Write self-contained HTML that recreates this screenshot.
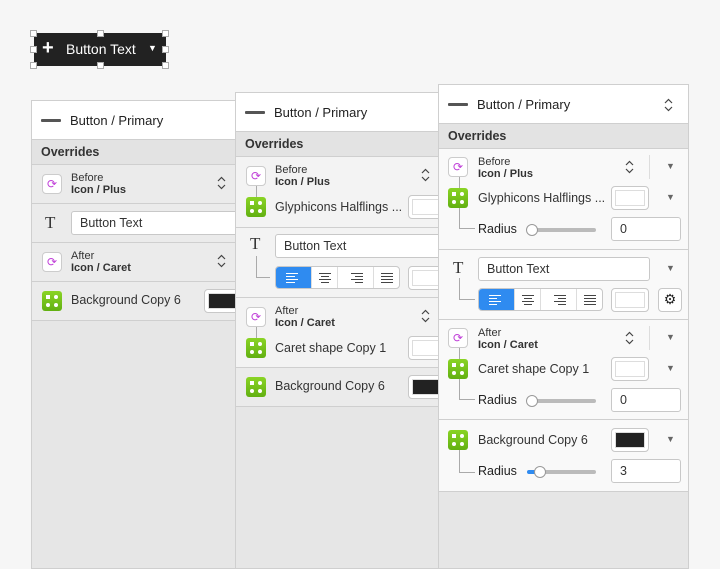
<!DOCTYPE html><html><head><style>
*{box-sizing:border-box;margin:0;padding:0}
body{width:720px;height:567px;overflow:hidden;background:#f6f6f6;font-family:"Liberation Sans",sans-serif;color:#333;position:relative;font-size:12.5px}
.a{position:absolute}
.panel{position:absolute;background:#e6e6e6;border:1px solid #cfcfcf;bottom:-2px;overflow:hidden}
.hdr{position:absolute;left:0;right:0;top:0;height:39px;background:#fff;border-bottom:1px solid #cfcfcf}
.hdr .t{position:absolute;left:38px;top:12px;font-size:13px;color:#222}
.hdr .sym{position:absolute;left:9px;top:18px;width:20px;height:3px;background:#555;border-radius:1px}
.ov{position:absolute;left:0;right:0;height:25px;background:#e3e3e3;border-bottom:1px solid #cfcfcf;font-weight:bold;font-size:12.5px;padding:5px 0 0 9px;color:#333}
.row{position:absolute;left:0;right:0;border-bottom:1px solid #cfcfcf}
.sw{position:absolute;width:20px;height:20px;border:1px solid #ccc;border-radius:4px;background:#fff;color:#c03fd8;font-size:12px;text-align:center;line-height:18px}
.gr{position:absolute;width:20px;height:20px;border-radius:3px;background:linear-gradient(#8ad425,#62b012)}
.gr i{position:absolute;width:4px;height:4px;background:#fff;border-radius:2px}
.gr i:first-child{border-radius:0}
.lbl{position:absolute;font-size:12.5px;color:#333;white-space:nowrap}
.sm{font-size:11px;line-height:12px}
.inp{position:absolute;background:#fff;border:1px solid #c8c8c8;border-radius:3px;height:24px;padding:4px 8px;font-size:12.5px}
.cw{position:absolute;width:38px;height:24px;border:1px solid #c8c8c8;border-radius:4px;background:#fff;padding:3px}
.cw b{display:block;width:100%;height:100%;border:1px solid #ddd}
.ud{position:absolute;width:9px;height:14px}
.dd{position:absolute;font-size:9px;color:#666}
.ln{position:absolute;border-left:1px solid #aaa;border-bottom:1px solid #aaa}
.sl{position:absolute;height:4px;background:#bbb;border-radius:2px}
.kn{position:absolute;width:12px;height:12px;border:1px solid #999;border-radius:6px;background:#fff}
.al{position:absolute;height:23px;border:1px solid #c8c8c8;border-radius:4px;background:#fff;display:flex;overflow:hidden}
.al div{flex:1;border-left:1px solid #ddd;display:flex;flex-direction:column;justify-content:center;align-items:center;gap:2px}
.al div:first-child{border:0;background:#2f8bf0}
.al span{display:block;height:1px;background:#444;width:12px}
.al div:first-child span{background:#fff}
.T{position:absolute;font-family:"Liberation Serif",serif;font-size:17px;color:#333}
.h{position:absolute;width:7px;height:7px;border:1px solid #aaa;background:#fff}
</style></head><body>
<svg width="0" height="0" style="position:absolute"><defs><symbol id="ud" viewBox="0 0 9 14"><path d="M1 5l3.5-3.5L8 5M1 9l3.5 3.5L8 9" fill="none" stroke="#444" stroke-width="1.2"/></symbol></defs></svg>

<div class="a" style="left:34px;top:33px;width:132px;height:33px;background:#222;color:#fff;font-size:14px">
<span class="a" style="left:8px;top:4px;font-size:20px;font-weight:bold">+</span>
<span class="a" style="left:32px;top:8px">Button Text</span>
<span class="a" style="left:114px;top:10px;font-size:9px">▼</span></div>
<div class="h" style="left:30px;top:30px"></div><div class="h" style="left:97px;top:30px"></div><div class="h" style="left:162px;top:30px"></div>
<div class="h" style="left:30px;top:46px"></div><div class="h" style="left:162px;top:46px"></div>
<div class="h" style="left:30px;top:62px"></div><div class="h" style="left:97px;top:62px"></div><div class="h" style="left:162px;top:62px"></div>

<!-- Panel 1 -->
<div class="panel" style="left:31px;top:100px;width:220px">
<div class="hdr"><div class="sym"></div><div class="t">Button / Primary</div></div>
<div class="ov" style="top:39px">Overrides</div>
<div class="row" style="top:64px;height:39px;background:#ebebeb">
<div class="sw" style="left:10px;top:9px">⟳</div>
<div class="lbl sm" style="left:39px;top:7px">Before<br><b>Icon / Plus</b></div>
<svg class="ud" style="left:185px;top:11px"><use href="#ud"/></svg></div>
<div class="row" style="top:103px;height:39px;background:#ebebeb">
<div class="T" style="left:13px;top:9px">T</div>
<div class="inp" style="left:39px;top:7px;width:190px">Button Text</div></div>
<div class="row" style="top:142px;height:39px;background:#ebebeb">
<div class="sw" style="left:10px;top:9px">⟳</div>
<div class="lbl sm" style="left:39px;top:7px">After<br><b>Icon / Caret</b></div>
<svg class="ud" style="left:185px;top:11px"><use href="#ud"/></svg></div>
<div class="row" style="top:181px;height:39px;background:#ebebeb">
<div class="gr" style="left:10px;top:9px"><i style="left:4px;top:4px"></i><i style="left:12px;top:4px"></i><i style="left:4px;top:12px"></i><i style="left:12px;top:12px"></i></div>
<div class="lbl" style="left:39px;top:11px">Background Copy 6</div>
<div class="cw" style="left:172px;top:7px"><b style="background:#222"></b></div></div>
</div>

<!-- Panel 2 -->
<div class="panel" style="left:235px;top:92px;width:215px">
<div class="hdr"><div class="sym"></div><div class="t">Button / Primary</div></div>
<div class="ov" style="top:39px">Overrides</div>
<div class="row" style="top:64px;height:71px;background:#f3f3f3">
<div class="ln" style="left:20px;top:28px;height:12px;width:0"></div>
<div class="sw" style="left:10px;top:9px">⟳</div>
<div class="lbl sm" style="left:39px;top:7px">Before<br><b>Icon / Plus</b></div>
<svg class="ud" style="left:185px;top:11px"><use href="#ud"/></svg>
<div class="gr" style="left:10px;top:40px"><i style="left:4px;top:4px"></i><i style="left:12px;top:4px"></i><i style="left:4px;top:12px"></i><i style="left:12px;top:12px"></i></div>
<div class="lbl" style="left:39px;top:43px">Glyphicons Halflings ...</div>
<div class="cw" style="left:172px;top:38px"><b></b></div></div>
<div class="row" style="top:135px;height:70px;background:#f3f3f3">
<div class="T" style="left:14px;top:6px">T</div>
<div class="ln" style="left:20px;top:28px;height:22px;width:14px"></div>
<div class="inp" style="left:39px;top:6px;width:190px">Button Text</div>
<div class="al" style="left:39px;top:38px;width:125px"><div style="align-items:flex-start;padding-left:10px"><span></span><span style="width:9px"></span><span></span><span style="width:9px"></span></div><div><span></span><span style="width:8px"></span><span></span><span style="width:8px"></span></div><div style="align-items:flex-end;padding-right:10px"><span></span><span style="width:8px"></span><span></span><span style="width:8px"></span></div><div><span></span><span></span><span></span><span></span></div></div>
<div class="cw" style="left:172px;top:38px"><b></b></div></div>
<div class="row" style="top:205px;height:70px;background:#f3f3f3">
<div class="ln" style="left:20px;top:28px;height:12px;width:0"></div>
<div class="sw" style="left:10px;top:9px">⟳</div>
<div class="lbl sm" style="left:39px;top:7px">After<br><b>Icon / Caret</b></div>
<svg class="ud" style="left:185px;top:11px"><use href="#ud"/></svg>
<div class="gr" style="left:10px;top:40px"><i style="left:4px;top:4px"></i><i style="left:12px;top:4px"></i><i style="left:4px;top:12px"></i><i style="left:12px;top:12px"></i></div>
<div class="lbl" style="left:39px;top:43px">Caret shape Copy 1</div>
<div class="cw" style="left:172px;top:38px"><b></b></div></div>
<div class="row" style="top:275px;height:39px;background:#ebebeb">
<div class="gr" style="left:10px;top:9px"><i style="left:4px;top:4px"></i><i style="left:12px;top:4px"></i><i style="left:4px;top:12px"></i><i style="left:12px;top:12px"></i></div>
<div class="lbl" style="left:39px;top:11px">Background Copy 6</div>
<div class="cw" style="left:172px;top:7px"><b style="background:#222"></b></div></div>
</div>

<!-- Panel 3 -->
<div class="panel" style="left:438px;top:84px;width:251px">
<div class="hdr"><div class="sym"></div><div class="t">Button / Primary</div><svg class="ud" style="left:225px;top:13px"><use href="#ud"/></svg></div>
<div class="ov" style="top:39px">Overrides</div>
<div class="row" style="top:64px;height:101px;background:#f9f9f9">
<div class="ln" style="left:20px;top:28px;height:52px;width:16px"></div>
<div class="sw" style="left:9px;top:8px">⟳</div>
<div class="lbl sm" style="left:39px;top:7px">Before<br><b>Icon / Plus</b></div>
<svg class="ud" style="left:186px;top:11px"><use href="#ud"/></svg>
<div class="a" style="left:210px;top:6px;width:1px;height:24px;background:#ddd"></div>
<div class="dd" style="left:227px;top:12px">▼</div>
<div class="gr" style="left:9px;top:39px"><i style="left:4px;top:4px"></i><i style="left:12px;top:4px"></i><i style="left:4px;top:12px"></i><i style="left:12px;top:12px"></i></div>
<div class="lbl" style="left:39px;top:42px">Glyphicons Halflings ...</div>
<div class="cw" style="left:172px;top:37px"><b></b></div>
<div class="dd" style="left:227px;top:43px">▼</div>
<div class="lbl" style="left:39px;top:73px;color:#222">Radius</div>
<div class="sl" style="left:90px;top:79px;width:67px"></div><div class="kn" style="left:87px;top:75px"></div>
<div class="inp" style="left:172px;top:68px;width:70px">0</div></div>
<div class="row" style="top:165px;height:70px;background:#f9f9f9">
<div class="T" style="left:14px;top:8px">T</div>
<div class="ln" style="left:20px;top:28px;height:22px;width:16px"></div>
<div class="inp" style="left:39px;top:7px;width:172px">Button Text</div>
<div class="dd" style="left:227px;top:13px">▼</div>
<div class="al" style="left:39px;top:38px;width:125px"><div style="align-items:flex-start;padding-left:10px"><span></span><span style="width:8px"></span><span></span><span style="width:8px"></span></div><div><span></span><span style="width:8px"></span><span></span><span style="width:8px"></span></div><div style="align-items:flex-end;padding-right:10px"><span></span><span style="width:8px"></span><span></span><span style="width:8px"></span></div><div><span></span><span></span><span></span><span></span></div></div>
<div class="cw" style="left:172px;top:38px"><b></b></div>
<div class="a" style="left:219px;top:38px;width:24px;height:24px;border:1px solid #c8c8c8;border-radius:4px;background:#fff;text-align:center;line-height:21px;font-size:14px;color:#222">⚙</div></div>
<div class="row" style="top:235px;height:100px;background:#f9f9f9">
<div class="ln" style="left:20px;top:28px;height:52px;width:16px"></div>
<div class="sw" style="left:9px;top:8px">⟳</div>
<div class="lbl sm" style="left:39px;top:7px">After<br><b>Icon / Caret</b></div>
<svg class="ud" style="left:186px;top:11px"><use href="#ud"/></svg>
<div class="a" style="left:210px;top:6px;width:1px;height:24px;background:#ddd"></div>
<div class="dd" style="left:227px;top:12px">▼</div>
<div class="gr" style="left:9px;top:39px"><i style="left:4px;top:4px"></i><i style="left:12px;top:4px"></i><i style="left:4px;top:12px"></i><i style="left:12px;top:12px"></i></div>
<div class="lbl" style="left:39px;top:42px">Caret shape Copy 1</div>
<div class="cw" style="left:172px;top:37px"><b></b></div>
<div class="dd" style="left:227px;top:43px">▼</div>
<div class="lbl" style="left:39px;top:73px;color:#222">Radius</div>
<div class="sl" style="left:90px;top:79px;width:67px"></div><div class="kn" style="left:87px;top:75px"></div>
<div class="inp" style="left:172px;top:68px;width:70px">0</div></div>
<div class="row" style="top:335px;height:72px;background:#f9f9f9">
<div class="ln" style="left:20px;top:26px;height:27px;width:16px"></div>
<div class="gr" style="left:9px;top:10px"><i style="left:4px;top:4px"></i><i style="left:12px;top:4px"></i><i style="left:4px;top:12px"></i><i style="left:12px;top:12px"></i></div>
<div class="lbl" style="left:39px;top:13px">Background Copy 6</div>
<div class="cw" style="left:172px;top:8px"><b style="background:#222"></b></div>
<div class="dd" style="left:227px;top:14px">▼</div>
<div class="lbl" style="left:39px;top:44px;color:#222">Radius</div>
<div class="sl" style="left:90px;top:50px;width:67px"></div><div class="sl" style="left:88px;top:50px;width:10px;background:#2f8bf0"></div><div class="kn" style="left:95px;top:46px"></div>
<div class="inp" style="left:172px;top:39px;width:70px">3</div></div>
</div>
</body></html>
